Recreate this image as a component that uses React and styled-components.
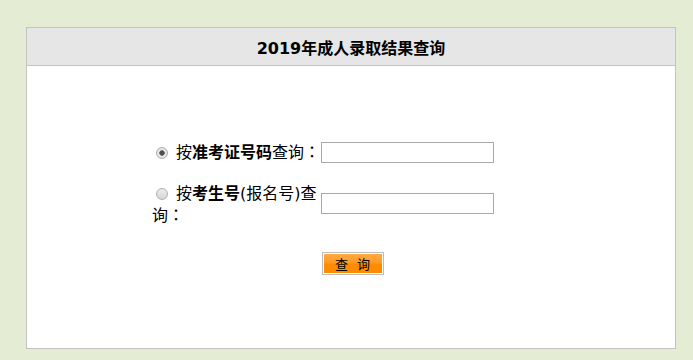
import React from "react";
import styled, { createGlobalStyle } from "styled-components";

const Global = createGlobalStyle`
  html, body { margin: 0; padding: 0; background: #e4ecd4; }
  body { font-family: "DejaVu Sans", "Noto Sans CJK SC", sans-serif; color: #000; }
`;

const Page = styled.div`
  padding: 27px 0 0 26px;
  height: 333px;
`;

const Panel = styled.div`
  width: 650px;
  height: 322px;
  box-sizing: border-box;
  border: 1px solid #c3c3c3;
  background: #fff;
`;

const Header = styled.div`
  height: 38px;
  box-sizing: border-box;
  background: #e6e6e6;
  border-bottom: 1px solid #c3c3c3;
  display: flex;
  align-items: center;
  justify-content: center;
  font-size: 16px;
  font-weight: bold;
  padding-top: 1px;
`;

const Form = styled.div`
  padding: 65px 0 0 125px;
`;

const Row = styled.div`
  display: flex;
  align-items: center;
  padding: 10px 0;
`;

const Label = styled.label`
  width: 169px;
  font-size: 16px;
  line-height: 21px;
  font-family: "DejaVu Sans", "Noto Sans CJK SC", sans-serif;
`;

const Colon = styled.span`
  font-family: "Noto Sans CJK TC", sans-serif;
`;

const Radio = styled.span`
  display: inline-block;
  width: 12px;
  height: 12px;
  margin: 0 8px 0 4px;
  border-radius: 50%;
  box-sizing: border-box;
  border: 1px solid #b0b0b0;
  background: ${(p) =>
    p.$checked
      ? "radial-gradient(circle, #4a4a4a 0, #555 2.4px, #e8e8e8 3px, #dcdcdc 100%)"
      : "linear-gradient(#ececec, #d6d6d6)"};
  vertical-align: -1px;
`;

const B = styled.b`
  font-weight: bold;
`;

const Input = styled.input`
  width: 173px;
  height: 21px;
  box-sizing: border-box;
  border: 1px solid #a9a9a9;
  margin: ${(p) => (p.$lift ? "-3px 0 0 0" : "0")};
  padding: 0 2px;
  background: #fff;
  outline: none;
`;

const ButtonRow = styled.div`
  padding: 16px 0 0 170px;
`;

const Button = styled.button`
  width: 62px;
  height: 23px;
  box-sizing: border-box;
  border: 1px solid #bdbdbd;
  padding: 1px;
  margin: 0;
  background: #fff;
  display: flex;
  cursor: pointer;
`;

const ButtonFace = styled.span`
  flex: 1;
  display: flex;
  align-items: center;
  justify-content: center;
  background: linear-gradient(#ffa946 0%, #ff9a22 45%, #ff8c00 55%, #ff8a00 100%);
  font-family: "Noto Sans CJK SC", sans-serif;
  font-size: 13px;
  color: #000;
  letter-spacing: 1px;
  white-space: pre;
`;

export default function App() {
  return (
    <>
      <Global />
      <Page>
        <Panel>
          <Header>2019年成人录取结果查询</Header>
          <Form>
            <Row>
              <Label>
                <Radio $checked />按<B>准考证号码</B>查询<Colon>：</Colon>
              </Label>
              <Input type="text" />
            </Row>
            <Row>
              <Label>
                <Radio />按<B>考生号</B>(报名号)查询<Colon>：</Colon>
              </Label>
              <Input type="text" $lift />
            </Row>
            <ButtonRow>
              <Button type="button">
                <ButtonFace>查  询</ButtonFace>
              </Button>
            </ButtonRow>
          </Form>
        </Panel>
      </Page>
    </>
  );
}
